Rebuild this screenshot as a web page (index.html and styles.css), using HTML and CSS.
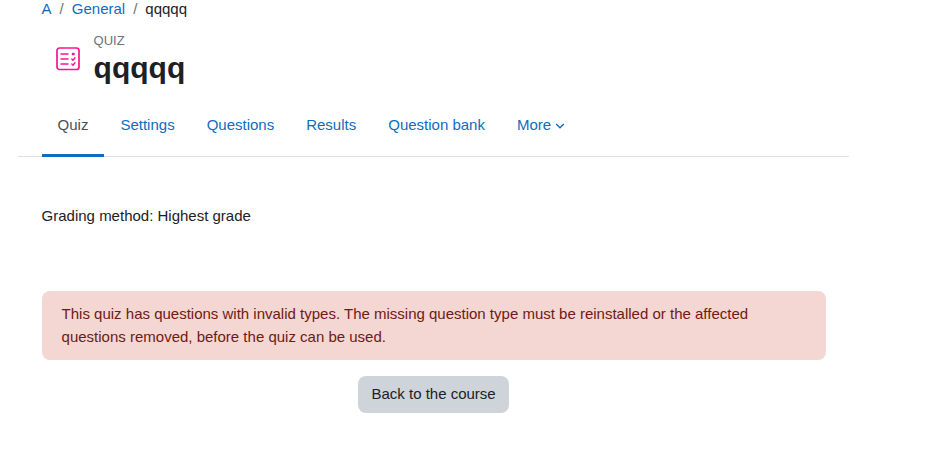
FILE: index.html
```html
<!DOCTYPE html>
<html lang="en">
<head>
<meta charset="utf-8">
<title>qqqqq</title>
<link rel="stylesheet" href="styles.css">
</head>
<body>
<div class="page">
  <nav class="crumbs">
    <a href="#">A</a><span class="sep">/</span><a href="#">General</a><span class="sep">/</span><span class="cur">qqqqq</span>
  </nav>
  <header class="head">
    <div class="icon">
      <svg width="24" height="24" viewBox="0 0 24 24" fill="none" stroke="#f7158f" stroke-width="1.7" stroke-linecap="round" stroke-linejoin="round">
        <rect x="1" y="1" width="22" height="21.5" rx="2.5"/>
        <path d="M5 7h7M5 12h7M5 17h7" stroke-width="1.4"/>
        <path d="M16.5 6.5h1.5v1h-1.5zM15.8 12l1.2 1.2 2-2.4M15.8 17l1.2 1.2 2-2.4" stroke-width="1.4"/>
      </svg>
    </div>
    <div class="titles">
      <div class="kicker">QUIZ</div>
      <h1>qqqqq</h1>
    </div>
  </header>
  <div class="tabs">
    <a class="tab active" href="#">Quiz</a>
    <a class="tab" href="#">Settings</a>
    <a class="tab" href="#">Questions</a>
    <a class="tab" href="#">Results</a>
    <a class="tab" href="#">Question bank</a>
    <a class="tab" href="#">More <svg class="caret" width="10" height="6" viewBox="0 0 10 6" fill="none" stroke="#0f6cbf" stroke-width="1.4"><path d="M1.2 1l3.8 3.8L8.8 1"/></svg></a>
  </div>
  <p class="method">Grading method: Highest grade</p>
  <div class="alert">This quiz has questions with invalid types. The missing question type must be reinstalled or the affected questions removed, before the quiz can be used.</div>
  <div class="actions"><a class="btn" href="#">Back to the course</a></div>
</div>
</body>
</html>
```
FILE: styles.css
```css
* { box-sizing: border-box; }
html, body { margin: 0; padding: 0; background: #fff; }
body { font-family: "Liberation Sans", Arial, sans-serif; font-size: 15px; line-height: 22.5px; color: #1d2125; }
a { color: #0f6cbf; text-decoration: none; }
.page { width: 849px; padding-left: 18px; }
.crumbs { height: 18px; padding-left: 23.6px; display: flex; align-items: center; }
.sep { margin: 0 8px; color: #6a737b; }
.head { display: flex; padding-left: 38px; margin-top: 13px; height: 65px; }
.icon { width: 24px; height: 24px; margin-top: 16px; margin-right: 13.6px; }
.kicker { font-size: 13px; line-height: 20px; color: #6a737b; }
h1 { margin: 0; font-size: 30px; line-height: 34px; font-weight: 700; color: #1d2125; }
.tabs { display: flex; height: 62px; padding-left: 23.6px; border-bottom: 1px solid #dee2e6; margin-top: -1px; }
.tab { padding: 0 16px; line-height: 59px; height: 62px; }
.tab.active { color: #495057; border-bottom: 3px solid #0f6cbf; }
.caret { vertical-align: 1px; }
.method { margin: 48px 0 0 23.6px; }
.alert { margin: 63.7px 0 0 24px; width: 784px; padding: 12px 19.6px; background: #f4d6d2; color: #6e1b14; border-radius: 8px; }
.actions { width: 784px; margin-left: 23.6px; margin-top: 16px; display: flex; justify-content: center; }
.btn { display: block; background: #ced4da; color: #1d2125; padding: 7px 13.6px; height: 37px; border-radius: 8px; }
```
